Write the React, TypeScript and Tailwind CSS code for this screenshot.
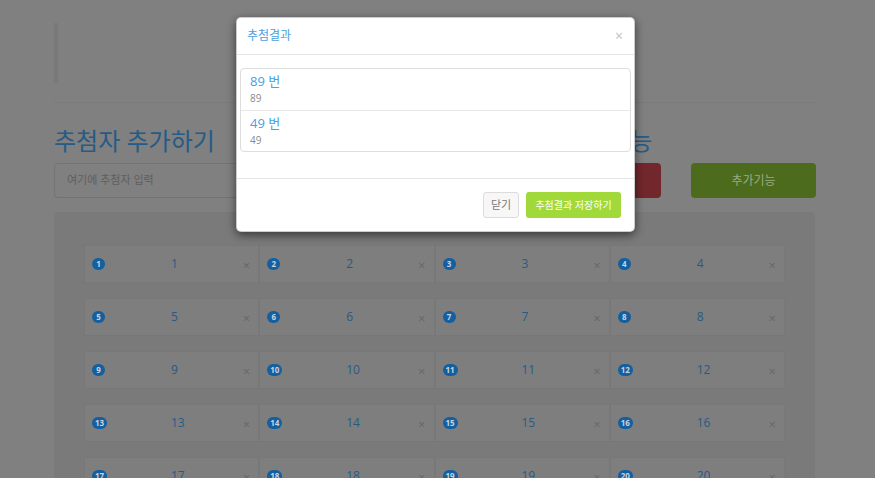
import React from 'react';

const FONT = "font-['Open_Sans','Noto_Sans_CJK_KR',sans-serif]";

const cells = Array.from({ length: 24 }, (_, i) => i + 1);

const picks = [
  { no: 89, sub: '89' },
  { no: 49, sub: '49' },
];

function Cell({ n }: { n: number }) {
  return (
    <div className="grid grid-cols-[79px_1fr_auto] items-center h-[38px] pl-[7px] pr-[8px] bg-[#7e7e7e] border border-[#787878]">
      <span className="flex">
        <span className="h-[12px] min-w-[13px] px-[3px] rounded-full bg-[#145f9f] text-[#c9d3de] text-[8px] font-bold leading-[12px] text-center">
          {n}
        </span>
      </span>
      <span className="text-[12px] text-[#275b85] leading-none">{n}</span>
      <span className="text-[13px] text-[#676767] leading-none mt-[3px]">×</span>
    </div>
  );
}

export default function App() {
  return (
    <div className={`relative w-full h-[478px] overflow-hidden bg-[#808080] ${FONT}`}>
      {/* page under the backdrop */}
      <div className="ml-[54px] w-[762px] pt-[23px]">
        <div className="h-[60px] border-l-4 border-[#797979]" />
        <hr className="mt-[19px] border-0 border-t border-[#7a7a7a]" />

        <div className="flex gap-[30px] mt-[22px]">
          <div className="w-[480px] flex flex-col">
            <h3 className="h-[32px] text-[24px] leading-[32px] text-[#255b86] whitespace-nowrap">추첨자 추가하기</h3>
            <div className="mt-[6px] h-[35px] rounded-[4px] border border-[#737373] flex items-center pl-[12px] text-[11px] text-[#5e5e5e]">
              여기에 추첨자 입력
            </div>
          </div>
          <div className="w-[97px] flex flex-col">
            <h3 className="h-[32px] text-[24px] leading-[32px] text-[#255b86] whitespace-nowrap">추첨기능</h3>
            <div className="mt-[6px] h-[35px] rounded-[4px] bg-[#72272c]" />
          </div>
          <div className="w-[125px] flex flex-col">
            <div className="h-[32px]" />
            <div className="mt-[6px] h-[35px] rounded-[4px] bg-[#4d6b1c] flex items-center justify-center text-[12px] text-[#9aab84]">
              추가기능
            </div>
          </div>
        </div>

        <div className="mt-[14px] w-[761px] h-[300px] rounded-t-[4px] bg-[#7a7a7a] pt-[33px] pl-[30px]">
          <div className="grid grid-cols-4 w-[701px] gap-y-[15px]">
            {cells.map((n) => (
              <Cell key={n} n={n} />
            ))}
          </div>
        </div>
      </div>

      {/* result modal */}
      <div className="absolute left-[236px] top-[17px] w-[399px] bg-white rounded-[5px] border border-black/20 shadow-[0_3px_10px_rgba(0,0,0,0.55)]">
        <div className="h-[37px] border-b border-[#e5e5e5] flex items-center justify-between pl-[10px] pr-[11px]">
          <span className="text-[12px] text-[#4a9fdf]">추첨결과</span>
          <span className="text-[14px] leading-none text-[#c2c2c2]">×</span>
        </div>
        <div className="pt-[13px] px-[3px] pb-[26px]">
          <div className="border border-[#dddddd] rounded-[4px]">
            {picks.map((p, i) => (
              <div key={p.no} className={`h-[41px] px-[9px] pt-[4px] ${i > 0 ? 'border-t border-[#e8e8e8]' : ''}`}>
                <div className="text-[13px] leading-[16px] text-[#4a9fdf]">{p.no} 번</div>
                <div className="mt-[2px] text-[10px] leading-[14px] text-[#8a8a8a]">{p.sub}</div>
              </div>
            ))}
          </div>
        </div>
        <div className="h-[53px] border-t border-[#e5e5e5] flex items-center justify-end gap-[7px] pr-[13px]">
          <button className="h-[26px] w-[36px] rounded-[3px] border border-[#dcdcdc] bg-[#f7f7f7] text-[11px] text-[#777777]">
            닫기
          </button>
          <button className="h-[26px] w-[95px] rounded-[3px] bg-[#a1d93b] text-[10px] text-white">
            추첨결과 저장하기
          </button>
        </div>
      </div>
    </div>
  );
}
